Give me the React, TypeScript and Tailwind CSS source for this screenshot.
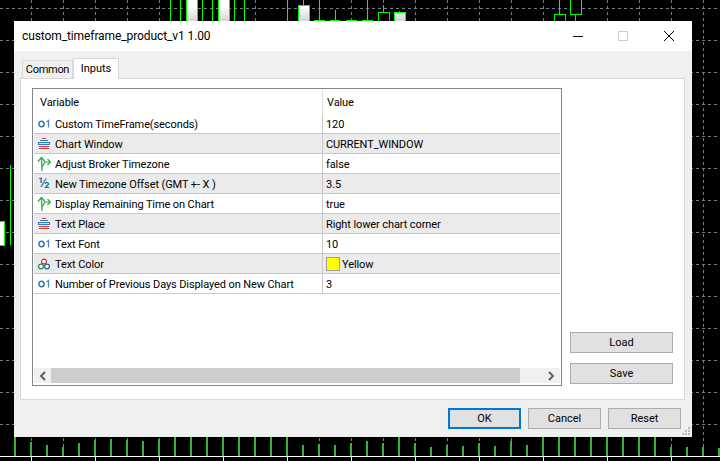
import React from "react";

const font = { fontFamily: 'Roboto, "Noto Sans", sans-serif' };

// chart strips around the dialog
const barTops: [number, number][] = [
  [15, 437], [31, 442], [47, 445], [63, 447], [79, 443], [95, 440], [111, 439], [127, 440],
  [143, 441], [159, 439], [175, 437], [191, 437], [207, 437], [223, 437], [239, 437], [255, 437],
  [271, 437], [287, 437], [303, 445], [319, 444], [335, 445], [351, 443], [367, 441], [383, 443],
  [399, 437], [415, 443], [431, 447], [447, 445], [463, 446], [479, 443], [495, 446], [511, 441],
  [527, 445], [543, 437], [559, 437], [575, 437], [591, 437], [607, 437], [623, 437], [639, 437],
  [655, 437], [671, 447], [687, 447], [703, 447], [719, 448],
];
const ticks = [31, 95, 159, 223, 287, 351, 415, 479, 543, 607, 671];
const wicks: [number, number, number][] = [
  [170, 0, 21], [180, 0, 21], [202, 0, 21], [212, 0, 21], [234, 0, 21], [244, 0, 21],
  [287, 0, 21], [303, 0, 5], [319, 0, 20], [335, 10, 20], [367, 0, 20], [383, 5, 12],
  [399, 11, 12], [559, 0, 14], [575, 14, 21], [10, 165, 245],
];
const bases: [number, number][] = [[314, 325], [330, 340], [346, 357], [362, 373]];
const candles: [number, number, number, number, string][] = [
  [186, -2, 11, 30, "url(#fade)"],
  [218, -2, 11, 30, "url(#fade)"],
  [298, 5, 11, 20, "url(#fade)"],
  [378, 12, 11, 12, "#000"],
  [394, 12, 11, 12, "url(#fade)"],
  [554, 14, 11, 10, "#000"],
  [570, -2, 11, 16, "#000"],
  [-6, 221, 10, 24, "#fff"],
];

function Chart() {
  const vs = Array.from({ length: 22 }, (_, i) => 31 + i * 32);
  const hs = Array.from({ length: 14 }, (_, i) => 8 + i * 32);
  return (
    <svg className="absolute inset-0" width={720} height={461} shapeRendering="crispEdges">
      <defs>
        <linearGradient id="fade" gradientUnits="userSpaceOnUse" x1="0" y1="6" x2="0" y2="22">
          <stop offset="0" stopColor="#ffffff" />
          <stop offset="1" stopColor="#d4d4d4" />
        </linearGradient>
      </defs>
      {hs.map((y) => (
        <line key={y} x1={0} x2={720} y1={y + 0.5} y2={y + 0.5} stroke="#708090" strokeDasharray="3 3" />
      ))}
      {vs.map((x) => (
        <line key={x} x1={x + 0.5} x2={x + 0.5} y1={0} y2={456} stroke="#708090" strokeDasharray="3 3" />
      ))}
      {wicks.map(([x, a, b]) => (
        <line key={x + "-" + a} x1={x + 0.5} x2={x + 0.5} y1={a} y2={b} stroke="#00ff00" />
      ))}
      {bases.map(([a, b]) => (
        <line key={a} x1={a} x2={b} y1={20.5} y2={20.5} stroke="#00ff00" />
      ))}
      {candles.map(([x, y, w, h, fill]) => (
        <rect key={x} x={x + 0.5} y={y + 0.5} width={w} height={h} fill={fill} stroke="#00ff00" />
      ))}
      {barTops.map(([x, y]) => (
        <rect key={x} x={x - 1} y={y} width={2} height={456 - y} fill="#2eb82e" />
      ))}
      <rect x={0} y={456} width={720} height={1} fill="#ffffff" />
      {ticks.map((x) => (
        <rect key={x} x={x} y={456} width={1} height={5} fill="#ffffff" />
      ))}
    </svg>
  );
}

function IntIcon() {
  return (
    <svg width={13} height={10} viewBox="0 0 13 10" fill="none">
      <ellipse cx={3.5} cy={5} rx={2.6} ry={2.8} stroke="#2a72b5" strokeWidth={1.4} />
      <path d="M8.5 3 L10.5 1.5 V8.5" stroke="#4d86b8" strokeWidth={1.2} />
    </svg>
  );
}

function EnumIcon() {
  return (
    <svg width={14} height={14} viewBox="0 0 14 14" shapeRendering="crispEdges">
      <rect x={5} y={1} width={4} height={1} fill="#e23a3a" />
      <rect x={3} y={3} width={8} height={1} fill="#2f7fc1" />
      <rect x={1} y={5} width={12} height={3} fill="#2f7fc1" />
      <rect x={2} y={6} width={10} height={1} fill="#cfe3f3" />
      <rect x={2} y={9} width={10} height={1} fill="#e23a3a" />
      <rect x={2} y={11} width={10} height={1} fill="#e23a3a" />
    </svg>
  );
}

function BoolIcon() {
  return (
    <svg width={14} height={15} viewBox="0 0 14 15" fill="none" stroke="#1fa83c" strokeWidth={1.2}>
      <path d="M5 15 L4.5 2" />
      <path d="M1 5.5 L4.5 1.5 L8 5.5" />
      <path d="M5 11 L8 6 H13" />
      <path d="M10.5 3.2 L13.5 6 L10.5 8.8" />
    </svg>
  );
}

function FracIcon() {
  return <span className="w-[14px] text-[15px] leading-none font-medium text-[#1f6fb5] text-center">½</span>;
}

function ColorIcon() {
  return (
    <svg width={14} height={14} viewBox="0 0 14 14" strokeWidth={1.2} fill="#ffffff">
      <circle cx={7} cy={4.5} r={2.4} stroke="#d83030" />
      <circle cx={4} cy={9.5} r={2.4} stroke="#2e8b3c" />
      <circle cx={10} cy={9.5} r={2.4} stroke="#1f5fa8" />
    </svg>
  );
}

const rows: { icon: React.ReactNode; name: string; value: string; swatch?: boolean }[] = [
  { icon: <IntIcon />, name: "Custom TimeFrame(seconds)", value: "120" },
  { icon: <EnumIcon />, name: "Chart Window", value: "CURRENT_WINDOW" },
  { icon: <BoolIcon />, name: "Adjust Broker Timezone", value: "false" },
  { icon: <FracIcon />, name: "New Timezone Offset (GMT +- X )", value: "3.5" },
  { icon: <BoolIcon />, name: "Display Remaining Time on Chart", value: "true" },
  { icon: <EnumIcon />, name: "Text Place", value: "Right lower chart corner" },
  { icon: <IntIcon />, name: "Text Font", value: "10" },
  { icon: <ColorIcon />, name: "Text Color", value: "Yellow", swatch: true },
  { icon: <IntIcon />, name: "Number of Previous Days Displayed on New Chart", value: "3" },
];

function Btn({ label, className }: { label: string; className: string }) {
  return (
    <button className={"h-[21px] bg-[#e1e1e1] flex items-center justify-center pt-[2px] text-[11px] text-black " + className}>
      {label}
    </button>
  );
}

export default function App() {
  return (
    <div className="relative w-[720px] h-[461px] bg-black overflow-hidden" style={font}>
      <Chart />

      <div className="absolute left-[14px] top-[21px] w-[678px] h-[416px] bg-[#f0f0f0] flex flex-col">
        {/* Title bar */}
        <div className="h-[30px] bg-white flex items-center justify-between">
          <span className="pl-[8px] text-[12px] tracking-[-0.1px] text-black">custom_timeframe_product_v1 1.00</span>
          <div className="flex items-center pr-[18px]">
            <svg width={10} height={10} className="mr-[35px]" shapeRendering="crispEdges">
              <rect x={0} y={5} width={10} height={1} fill="#000" />
            </svg>
            <svg width={10} height={10} className="mr-[36px]" shapeRendering="crispEdges">
              <rect x={0.5} y={0.5} width={9} height={9} fill="none" stroke="#cccccc" />
            </svg>
            <svg width={10} height={10}>
              <path d="M0 0 L10 10 M10 0 L0 10" stroke="#000" strokeWidth={1} />
            </svg>
          </div>
        </div>

        {/* Tabs */}
        <div className="h-[27px] flex items-end pl-[8px] text-[11px] text-black">
          <div className="w-[51px] h-[18px] bg-[#f0f0f0] border border-b-0 border-[#d9d9d9] flex items-center justify-center pt-[2px] tracking-[-0.3px]">
            Common
          </div>
          <div className="w-[46px] h-[21px] -mb-px relative z-10 bg-white border border-b-0 border-[#d9d9d9] flex items-center justify-center">
            Inputs
          </div>
        </div>

        {/* Panel */}
        <div className="ml-[6px] mr-[7px] h-[322px] bg-white border border-[#d9d9d9] flex pl-[11px] pr-[11px] pt-[9px]">
          <div className="w-[530px] h-[298px] border border-[#82878e] p-px flex flex-col text-[11px] tracking-[-0.1px] text-black">
            <div className="h-[24px] flex shrink-0">
              <div className="w-[288px] pl-[6px] pt-[2px] flex items-center">Variable</div>
              <div className="flex-1 border-l border-[#e0e0e0] pl-[4px] pt-[2px] flex items-center">Value</div>
            </div>
            {rows.map((r, i) => (
              <div
                key={r.name}
                className={"h-[20px] shrink-0 flex border-b border-[#c8c8c8] " + (i % 2 === 1 ? "bg-[#ebebeb]" : "bg-white")}
              >
                <div className="w-[288px] flex items-center pl-[3px] gap-[4px] whitespace-nowrap overflow-hidden">
                  <span className="w-[14px] h-[16px] flex items-center justify-center shrink-0">{r.icon}</span>
                  <span className="pt-[3px]">{r.name}</span>
                </div>
                <div className="flex-1 border-l border-[#c8c8c8] pl-[3px] flex items-center gap-[2px]">
                  {r.swatch && <span className="w-[14px] h-[14px] bg-[#ffff00] border border-[#a0a0a0]" />}
                  <span className="pt-[3px]">{r.value}</span>
                </div>
              </div>
            ))}
            <div className="flex-1" />
            <div className="h-[15px] shrink-0 mb-px flex bg-[#f0f0f0]">
              <div className="w-[17px] flex items-center justify-center">
                <svg width={8} height={10} viewBox="0 0 8 10" fill="none" stroke="#606060" strokeWidth={2}>
                  <path d="M6 1 L2 5 L6 9" />
                </svg>
              </div>
              <div className="w-[469px] bg-[#cdcdcd]" />
              <div className="flex-1 flex items-center justify-end pr-[5px]">
                <svg width={8} height={10} viewBox="0 0 8 10" fill="none" stroke="#606060" strokeWidth={2}>
                  <path d="M2 1 L6 5 L2 9" />
                </svg>
              </div>
            </div>
          </div>

          <div className="ml-[8px] w-[103px] h-[296px] flex flex-col justify-end gap-[10px]">
            <Btn label="Load" className="w-[103px] border border-[#adadad]" />
            <Btn label="Save" className="w-[103px] border border-[#adadad]" />
          </div>
        </div>

        {/* Bottom buttons */}
        <div className="mt-[8px] pr-[11px] flex justify-end gap-[7px]">
          <Btn label="OK" className="w-[73px] border-2 border-[#0078d7]" />
          <Btn label="Cancel" className="w-[73px] border border-[#adadad]" />
          <Btn label="Reset" className="w-[73px] border border-[#adadad]" />
        </div>

        <svg className="absolute right-[2px] bottom-[2px]" width={8} height={8} fill="#b8b8b8" shapeRendering="crispEdges">
          <rect x={6} y={0} width={2} height={2} />
          <rect x={3} y={3} width={2} height={2} />
          <rect x={6} y={3} width={2} height={2} />
          <rect x={0} y={6} width={2} height={2} />
          <rect x={3} y={6} width={2} height={2} />
          <rect x={6} y={6} width={2} height={2} />
        </svg>
      </div>
    </div>
  );
}
